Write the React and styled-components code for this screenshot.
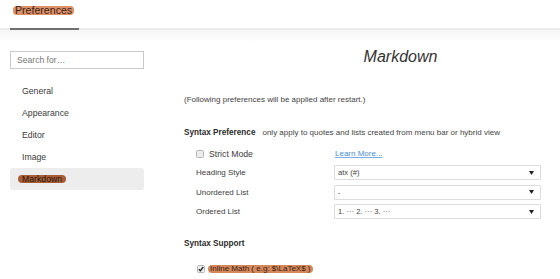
import React from "react";
import styled, { createGlobalStyle } from "styled-components";

const GlobalStyle = createGlobalStyle`
  html, body { margin: 0; padding: 0; background: #fff; }
  body { font-family: "Liberation Sans", Arial, sans-serif; color: #333; }
  * { box-sizing: border-box; }
`;

const Page = styled.div`
  width: 560px;
  height: 279px;
  overflow: hidden;
  display: flex;
  flex-direction: column;
`;

const Header = styled.div`
  height: 30px;
  flex: none;
  border-bottom: 2px solid #ebebeb;
  padding-left: 10px;
  display: flex;
`;

const Tab = styled.div`
  padding: 3px 5px 0;
  font-size: 10.6px;
  line-height: 14px;
  color: #333;
  border-bottom: 2px solid #707070;
  margin-bottom: -2px;
`;

const Highlight = styled.span`
  background: ${(p) => p.$color};
  border-radius: 4px;
  padding: 0 ${(p) => p.$pad || 1}px;
  margin-left: -${(p) => p.$pad || 1}px;
  color: ${(p) => p.$text || "#3a2418"};
  line-height: ${(p) => p.$lh || 8}px;
  display: inline-block;
`;

const Body = styled.div`
  flex: 1;
  display: flex;
  background: linear-gradient(#f5f5f5 0px, #ffffff 12px);
`;

const Sidebar = styled.div`
  width: 144px;
  flex: none;
  padding: 21px 0 0 10px;
  display: flex;
  flex-direction: column;
`;

const Search = styled.div`
  height: 18px;
  border: 1px solid #c8c8c8;
  background: #fff;
  font-size: 8.6px;
  color: #777;
  padding-left: 6px;
  display: flex;
  align-items: center;
`;

const NavList = styled.div`
  margin-top: 11px;
  display: flex;
  flex-direction: column;
`;

const NavItem = styled.div`
  height: 22px;
  display: flex;
  align-items: center;
  padding-left: 12px;
  font-size: 8.7px;
  color: #3c3c3c;
  border-radius: 3px;
  background: ${(p) => (p.$active ? "#ededed" : "transparent")};
`;

const Main = styled.div`
  flex: 1;
  padding: 18px 19px 0 40px;
  display: flex;
  flex-direction: column;
`;

const Title = styled.div`
  font-size: 16px;
  font-style: italic;
  line-height: 18px;
  color: #333;
  text-align: center;
  padding-left: 76px;
`;

const Note = styled.div`
  margin-top: 29px;
  font-size: 8px;
  line-height: 10px;
  color: #444;
`;

const SectionTitle = styled.div`
  margin-top: ${(p) => p.$mt}px;
  font-size: 8.2px;
  line-height: 10px;
  font-weight: bold;
  color: #2c2c2c;
  display: flex;
  align-items: baseline;
`;

const SectionHint = styled.span`
  font-weight: normal;
  font-size: 8px;
  color: #444;
  margin-left: 7px;
`;

const Grid = styled.div`
  margin-top: ${(p) => p.$mt}px;
  display: grid;
  grid-template-columns: 138px 1fr;
  padding-left: 12px;
  row-gap: 4.5px;
  align-items: center;
`;

const Label = styled.div`
  font-size: ${(p) => p.$fs || 8}px;
  color: #3c3c3c;
  display: flex;
  align-items: center;
  height: ${(p) => p.$h || 15}px;
`;

const Box = styled.span`
  width: 8px;
  height: 8px;
  border: 1px solid #b8b8b8;
  border-radius: 1.5px;
  background: #ececec;
  margin-right: 5px;
  display: inline-flex;
  align-items: center;
  justify-content: center;
  flex: none;
`;

const Link = styled.a`
  font-size: 8px;
  color: #4a8fd6;
  text-decoration: underline;
  text-decoration-color: #7aaee4;
  margin-left: 1px;
`;

const Select = styled.div`
  height: 15px;
  border: 1px solid #dcdcdc;
  border-radius: 1px;
  background: #fff;
  display: flex;
  align-items: center;
  justify-content: space-between;
  padding: 0 6px 0 3px;
  font-size: 7.6px;
  color: #444;
`;

const CheckRow = styled.div`
  margin-top: 15.5px;
  padding-left: 13px;
  display: flex;
  align-items: center;
  font-size: 8px;
`;

const Arrow = () => (
  <svg width="5" height="4" viewBox="0 0 5 4">
    <path d="M0 0H5L2.5 4Z" fill="#222" />
  </svg>
);

const Check = () => (
  <svg width="6" height="6" viewBox="0 0 6 6">
    <path d="M0.8 3.2L2.4 4.8L5.2 1" stroke="#222" strokeWidth="1.3" fill="none" />
  </svg>
);

export default function App() {
  const navs = ["General", "Appearance", "Editor", "Image"];
  return (
    <>
      <GlobalStyle />
      <Page>
        <Header>
          <Tab>
            <Highlight $color="#dd9068" $pad={2} $lh={9}>Preferences</Highlight>
          </Tab>
        </Header>
        <Body>
          <Sidebar>
            <Search>Search for…</Search>
            <NavList>
              {navs.map((n) => (
                <NavItem key={n}>{n}</NavItem>
              ))}
              <NavItem $active>
                <Highlight $color="#a85d38" $pad={4} $lh={8} $text="#2a1a10">Markdown</Highlight>
              </NavItem>
            </NavList>
          </Sidebar>
          <Main>
            <Title>Markdown</Title>
            <Note>(Following preferences will be applied after restart.)</Note>
            <SectionTitle $mt={23}>
              Syntax Preference
              <SectionHint>only apply to quotes and lists created from menu bar or hybrid view</SectionHint>
            </SectionTitle>
            <Grid $mt={8.5}>
              <Label $h={14} $fs={8.7}>
                <Box />
                Strict Mode
              </Label>
              <Label $h={14}>
                <Link href="#">Learn More...</Link>
              </Label>
              <Label>Heading Style</Label>
              <Select>
                <span>atx (#)</span>
                <Arrow />
              </Select>
              <Label>Unordered List</Label>
              <Select>
                <span>-</span>
                <Arrow />
              </Select>
              <Label>Ordered List</Label>
              <Select>
                <span>1. ··· 2. ··· 3. ···</span>
                <Arrow />
              </Select>
            </Grid>
            <SectionTitle $mt={20}>Syntax Support</SectionTitle>
            <CheckRow>
              <Box>
                <Check />
              </Box>
              <Highlight $color="#d4875a" $pad={2} $lh={8}>Inline Math ( e.g: $\LaTeX$ )</Highlight>
            </CheckRow>
          </Main>
        </Body>
      </Page>
    </>
  );
}
